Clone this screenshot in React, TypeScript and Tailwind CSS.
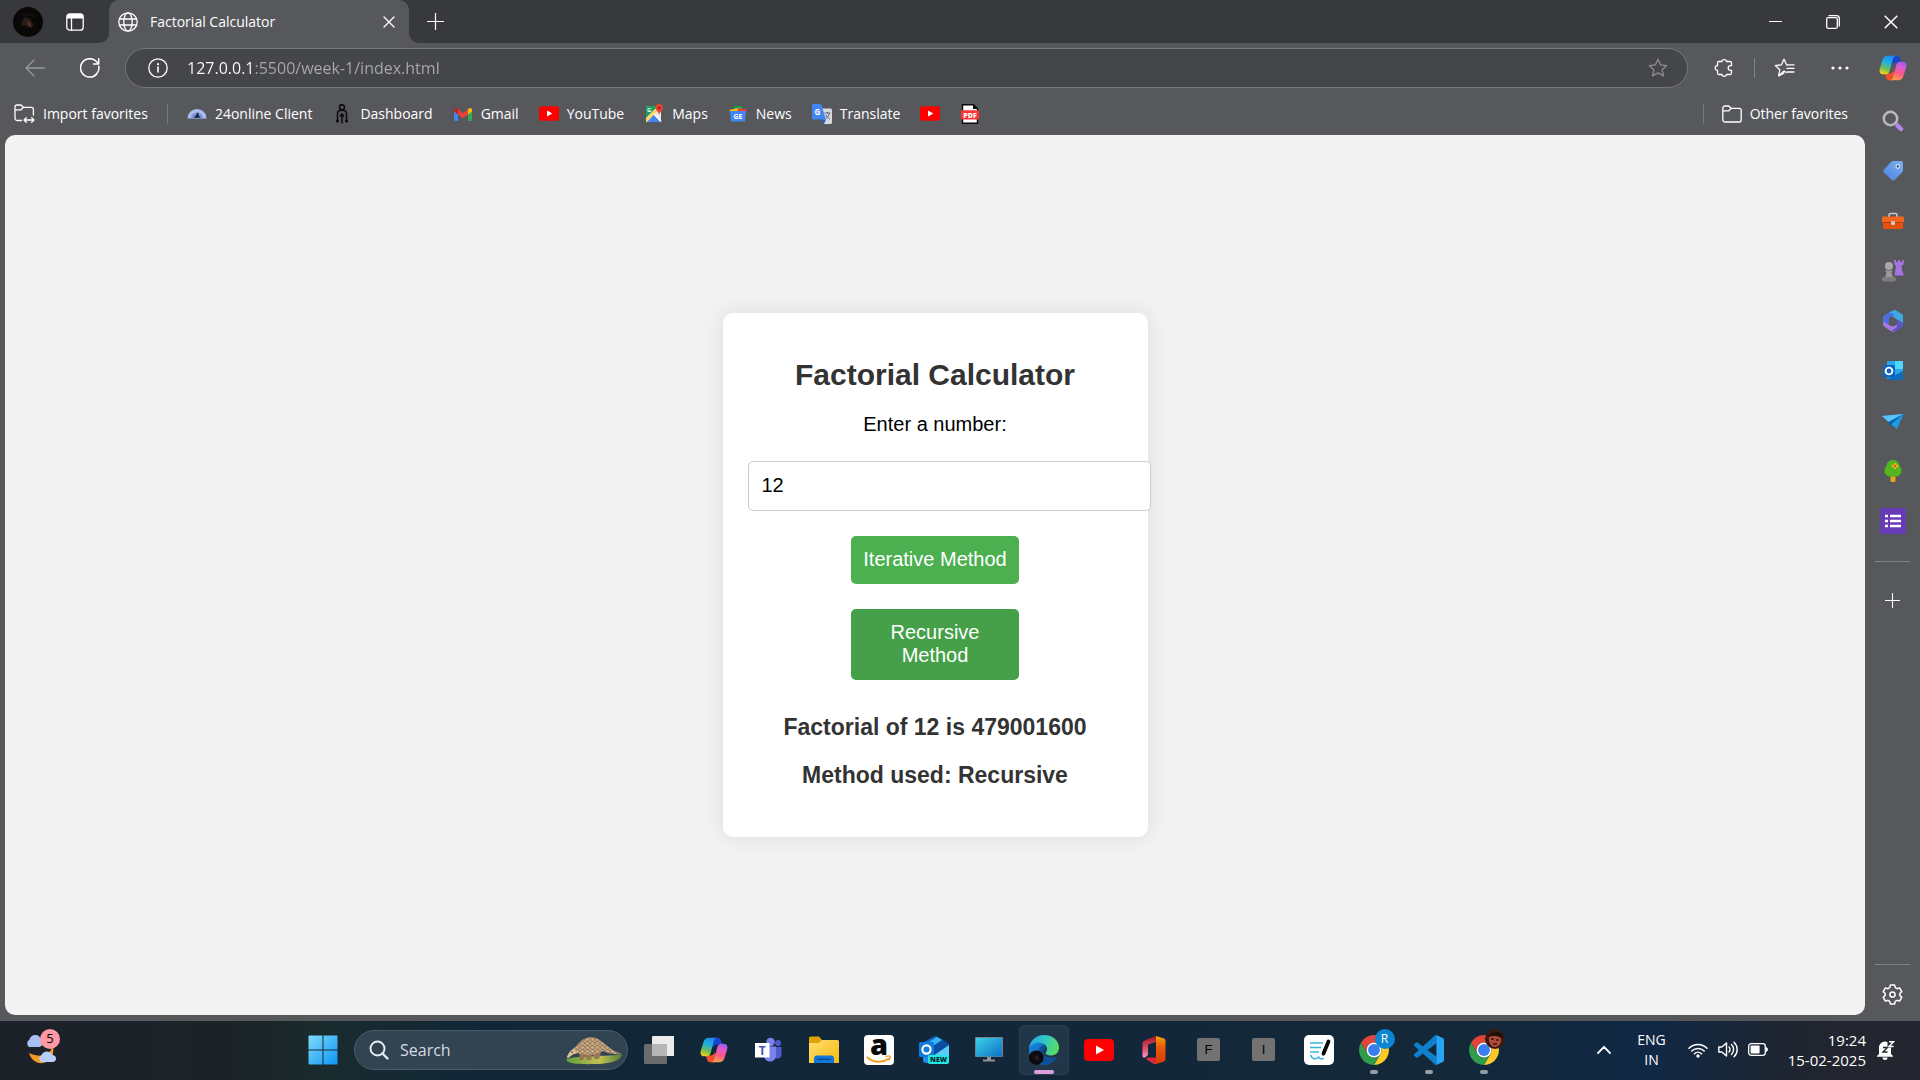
import React, { useState } from "react";

type P = { className?: string };

/* ---------- browser chrome icons ---------- */

const line = {
  fill: "none",
  stroke: "currentColor",
  strokeWidth: 1.3,
  strokeLinecap: "round" as const,
  strokeLinejoin: "round" as const,
};

const STAR = "M10 1.2l2.6 5.6 6.1.8-4.5 4.2 1.2 6.1-5.4-3-5.4 3 1.2-6.1L1.3 7.6l6.1-.8z";

const Avatar = () => (
  <svg viewBox="0 0 30 30" className="size-[30px]">
    <circle cx="15" cy="15" r="15" fill="#0a0707" />
    <path d="M9 14l3-4 4 1 3 4 2 5-4-2-2 3-3-3-4 1z" fill="#2c1a17" />
    <path d="M14 14l3 2 2 5-3-2z" fill="#5a3a30" />
    <path d="M8 8l5-2 7 1 3 4-6-2z" fill="#190f12" />
  </svg>
);

const TabActions = () => (
  <svg viewBox="0 0 18 18" className="size-[18px]">
    <rect x=".8" y=".8" width="16.4" height="16.4" rx="3" {...line} />
    <path d="M1 5.5V3.5A2.6 2.6 0 0 1 3.600 1h10.800A2.600 2.600 0 0 1 17 3.500v2z" fill="currentColor" />
    <path d="M5.500 5.500v11.500" {...line} />
  </svg>
);

const Globe = () => (
  <svg viewBox="0 0 20 20" className="size-[20px]">
    <g {...line}>
      <circle cx="10" cy="10" r="9.200" />
      <ellipse cx="10" cy="10" rx="4.200" ry="9.200" />
      <path d="M1.500 7h17M1.500 13h17" />
    </g>
  </svg>
);

const Cross = ({ className }: P) => (
  <svg viewBox="0 0 12 12" className={className}>
    <path d="M1 1l10 10M11 1L1 11" {...line} />
  </svg>
);

const Plus = ({ className }: P) => (
  <svg viewBox="0 0 18 18" className={className}>
    <path d="M9 .5v17M.5 9h17" {...line} />
  </svg>
);

const BackArrow = () => (
  <svg viewBox="0 0 20 18" className="h-[18px] w-[20px]">
    <path d="M19.500 9H1M9 1L1 9l8 8" {...line} />
  </svg>
);

const Reload = () => (
  <svg viewBox="0 0 20 20" className="size-[20px]">
    <path d="M18.800 8.200A9.200 9.200 0 1 1 15.500 2.700L18.500 5.500M18.700 .8v5.200h-5.200" {...line} strokeWidth={1.5} />
  </svg>
);

const Info = () => (
  <svg viewBox="0 0 20 20" className="size-[20px] shrink-0">
    <circle cx="10" cy="10" r="9.200" {...line} />
    <path d="M10 9v5" {...line} strokeWidth={1.600} />
    <circle cx="10" cy="6.200" r="1.100" fill="currentColor" />
  </svg>
);

const StarOutline = () => (
  <svg viewBox="0 0 20 20" className="size-[20px]">
    <path d={STAR} {...line} />
  </svg>
);

const Puzzle = () => (
  <svg viewBox="0 0 20 20" className="size-[20px]">
    <path
      d="M7.800 3.500a2.400 2.400 0 0 1 4.700 0h3.500a1.500 1.500 0 0 1 1.500 1.500v2.700h-1a2.300 2.300 0 0 0 0 4.600h1v2.700a1.500 1.500 0 0 1-1.500 1.500h-3.500a2.400 2.400 0 0 1-4.700 0H5A1.500 1.500 0 0 1 3.500 15v-2.700a2.300 2.300 0 0 1 0-4.600V5A1.500 1.500 0 0 1 5 3.500z"
      {...line}
    />
  </svg>
);

const StarList = () => (
  <svg viewBox="0 0 21 20" className="h-[20px] w-[21px]">
    <path d="M12 14.500l-2-1.500-5.400 4.900 1.200-6.100L1.300 7.600l6.100-.8L10 1.200l2.600 5.600 1 .2M4.800 17.900l5-2.800" {...line} />
    <path d="M13 10.300h7M13 14h7M14.500 6.800h5.500" {...line} />
  </svg>
);

const Dots = () => (
  <svg viewBox="0 0 18 4" className="h-[4px] w-[18px]" fill="currentColor">
    <circle cx="2" cy="2" r="1.600" />
    <circle cx="9" cy="2" r="1.600" />
    <circle cx="16" cy="2" r="1.600" />
  </svg>
);

const FolderOut = () => (
  <svg viewBox="0 0 20 18" className="h-[18px] w-[20px]">
    <path d="M.8 4V3A2 2 0 0 1 2.800 1h4l2.400 2.300h8a2 2 0 0 1 2 2v9.700a2 2 0 0 1-2 2H2.800a2 2 0 0 1-2-2zM.8 5.800h6L9.200 3.300" {...line} />
  </svg>
);

const ImportFolder = () => (
  <svg viewBox="0 0 21 19" className="h-[19px] w-[21px]">
    <path d="M7.500 16.500H3A2 2 0 0 1 1 14.500V3A2 2 0 0 1 3 1h4l2.400 2.300h8a2 2 0 0 1 2 2V11M1 5.800h6L9.400 3.300" {...line} />
    <path d="M10 16h10M12.300 13.700L10 16l2.300 2.300M17.700 13.700L20 16l-2.300 2.300" {...line} />
  </svg>
);

const Minimize = () => (
  <svg viewBox="0 0 13 13" className="size-[13px]">
    <path d="M0 6.500h13" stroke="currentColor" />
  </svg>
);

const Restore = () => (
  <svg viewBox="0 0 14 14" className="size-[14px]">
    <rect x=".7" y="2.700" width="10.600" height="10.600" rx="1.500" {...line} />
    <path d="M3 .7h7.500a2.800 2.800 0 0 1 2.800 2.800V11" {...line} />
  </svg>
);

const gearPath = (() => {
  const pts: string[] = [];
  for (let k = 0; k < 6; k++) {
    for (const [off, r] of [[-22, 7.4], [-13, 9.7], [13, 9.7], [22, 7.4]]) {
      const a = ((k * 60 - 90 + off) * Math.PI) / 180;
      pts.push(`${(10.5 + r * Math.cos(a)).toFixed(2)} ${(10.5 + r * Math.sin(a)).toFixed(2)}`);
    }
  }
  return "M" + pts.join("L") + "z";
})();

const Gear = () => (
  <svg viewBox="0 0 21 21" className="size-[21px]">
    <path d={gearPath} {...line} strokeWidth={1.500} />
    <circle cx="10.500" cy="10.500" r="2.600" {...line} strokeWidth={1.500} />
  </svg>
);

const RIBBON =
  "M9 .8h9c-2.600 0-3.600 1.200-4.300 3.800L10.800 15.500c-.8 2.800-2 3.800-4.300 3.800H4.500C1.200 19.300-.1 17 .9 13.500L3.600 4.700C4.500 2 6 .8 9 .8z";
const FOLD = "M14.500 .8h3.300c1.700 0 2.600.8 3.100 2.500l1.300 4.200h-3.700c-3.200 0-4.500.9-5.300 3.200l-1-2 1.500-5.200z";

const Copilot = ({ className }: P) => (
  <svg viewBox="0 0 28 26" className={className}>
    <defs>
      <linearGradient id="cpA" x1=".6" y1="0" x2=".3" y2="1">
        <stop offset="0" stopColor="#1c8cf0" />
        <stop offset=".4" stopColor="#22b0dc" />
        <stop offset=".72" stopColor="#6dbf52" />
        <stop offset="1" stopColor="#f7d21b" />
      </linearGradient>
      <linearGradient id="cpB" x1=".6" y1="0" x2=".3" y2="1">
        <stop offset="0" stopColor="#fba04a" />
        <stop offset=".4" stopColor="#f9588a" />
        <stop offset=".72" stopColor="#dd5ad0" />
        <stop offset="1" stopColor="#9a5cf2" />
      </linearGradient>
    </defs>
    <path d={FOLD} fill="#1746cf" />
    <path d={FOLD} fill="#f0512c" transform="rotate(180 14 13)" />
    <path d={RIBBON} fill="url(#cpA)" />
    <path d={RIBBON} fill="url(#cpB)" transform="rotate(180 14 13)" />
  </svg>
);

/* ---------- favourites icons ---------- */

const Gauge = () => (
  <svg viewBox="0 0 20 20" className="size-[20px]">
    <path d="M.5 14.500a9.500 9.500 0 0 1 19 0z" fill="#a9bdec" />
    <path d="M4 14.500a6 6 0 0 1 12 0z" fill="#7b93d6" />
    <path d="M7 14l4-6 1 4 2 1.500z" fill="#1c2542" />
  </svg>
);

const KeyPerson = () => (
  <svg viewBox="0 0 20 20" className="size-[20px]" fill="none" stroke="#0b0b0b" strokeWidth="1.500">
    <circle cx="10" cy="3.200" r="2.500" />
    <path d="M5.500 17V9.500C5.500 7 7.500 6.300 10 6.300s4.500.7 4.500 3.200V17M10 10v9.500M8 12.500l2-2.500 2 2.500" />
    <circle cx="5.500" cy="17" r=".8" />
    <circle cx="14.500" cy="17" r=".8" />
  </svg>
);

const Gmail = () => (
  <svg viewBox="0 0 20 20" className="size-[20px]">
    <path d="M1 6v9.500A1.500 1.500 0 0 0 2.500 17H5V9z" fill="#4285f4" />
    <path d="M19 6v9.500a1.500 1.500 0 0 1-1.500 1.500H15V9z" fill="#34a853" />
    <path d="M15 5.500l1-1c1.400-1.100 3-.3 3 1.500v1.500L15 10.500z" fill="#fbbc04" />
    <path d="M5 5.500l-1-1C2.600 3.400 1 4.200 1 6v1.500l4 3z" fill="#c5221f" />
    <path d="M5 5.300l5 3.900 5-3.900v5.200l-5 3.800-5-3.800z" fill="#ea4335" />
  </svg>
);

const YouTube = ({ className }: P) => (
  <svg viewBox="0 0 30 22" className={className}>
    <rect width="30" height="22" rx="4" fill="#f00" />
    <path d="M12 6.500l8 4.500-8 4.500z" fill="#fff" />
  </svg>
);

const Maps = () => (
  <svg viewBox="0 0 20 20" className="size-[20px]">
    <rect x="2" y="2" width="15" height="16" rx="1.500" fill="#e8eaed" />
    <path d="M3.500 2H14L2 14V3.500A1.500 1.500 0 0 1 3.500 2z" fill="#1e9e5a" />
    <path d="M2 18l8-8 7 8z" fill="#4285f4" />
    <path d="M2 14.500L12.500 4l2 2L3 18H2z" fill="#fdd663" />
    <path d="M10 10l7 7.500" stroke="#fff" strokeWidth="1.600" />
    <text x="3" y="8" fontSize="6" fontWeight="700" fill="#fff" fontFamily="Open Sans, sans-serif">G</text>
    <path d="M15.200 0a3.700 3.700 0 0 0-3.700 3.700c0 2.700 3 3.800 3.700 7 .7-3.200 3.700-4.300 3.700-7A3.700 3.700 0 0 0 15.200 0z" fill="#ea4335" />
    <circle cx="15.200" cy="3.700" r="1.300" fill="#8c1d14" />
  </svg>
);

const News = () => (
  <svg viewBox="0 0 20 20" className="size-[20px]">
    <path d="M6 2h8.500v5H6z" fill="#0c9d58" />
    <path d="M1.500 6L12 3.500 13 8H2z" fill="#fbbc04" />
    <path d="M10 4l8.500 1.500L18 9h-9z" fill="#ea4335" />
    <path d="M2 7h16l-1 10.500H3z" fill="#4285f4" />
    <text x="10" y="14.500" fontSize="7" fontWeight="700" textAnchor="middle" fill="#fff" fontFamily="Open Sans, sans-serif">GE</text>
  </svg>
);

const Translate = () => (
  <svg viewBox="0 0 20 20" className="size-[20px]">
    <path d="M8 4.500h10.500A1.500 1.500 0 0 1 20 6v12.500a1.500 1.500 0 0 1-1.500 1.500H12z" fill="#d5d8dc" />
    <path d="M1.500 0H9l5 15.500H1.500A1.500 1.500 0 0 1 0 14V1.500A1.500 1.500 0 0 1 1.500 0z" fill="#4285f4" />
    <path d="M9.500 15.500H14L12 20z" fill="#2a56c6" />
    <text x="5.500" y="10.500" fontSize="8" fontWeight="700" textAnchor="middle" fill="#fff" fontFamily="Open Sans, sans-serif">G</text>
    <path d="M12.500 9h6M15.500 8v1.500M17.500 9c-.5 2.500-2 4.500-4 6M14 11c.8 1.800 2 3 3.800 4" stroke="#5f6772" fill="none" />
  </svg>
);

const Pdf = () => (
  <svg viewBox="0 0 20 20" className="size-[20px]">
    <path d="M2.500 .7h11l4 4v14.600h-15z" fill="#fff" stroke="#0a0a0a" strokeWidth="1.400" />
    <path d="M13 .5v4.500h4.500z" fill="#0a0a0a" />
    <rect x="1" y="6.300" width="18" height="9.200" rx="1" fill="#fb3434" />
    <text x="10" y="13.500" fontSize="7" fontWeight="800" textAnchor="middle" fill="#fff" fontFamily="Open Sans, sans-serif">PDF</text>
  </svg>
);

/* ---------- sidebar icons ---------- */

const SideSearch = () => (
  <svg viewBox="0 0 22 22" className="size-[22px]">
    <path d="M15.500 15.500l3.500 3.500" stroke="#b487ee" strokeWidth="4.500" strokeLinecap="round" />
    <circle cx="8.500" cy="8.500" r="6.700" fill="none" stroke="#b9b9b9" strokeWidth="2.500" />
  </svg>
);

const Tag = () => (
  <svg viewBox="0 0 22 22" className="size-[22px]">
    <defs>
      <linearGradient id="tg" x1="1" y1="0" x2="0" y2="1">
        <stop offset="0" stopColor="#7fb0f5" />
        <stop offset="1" stopColor="#4a82dc" />
      </linearGradient>
    </defs>
    <path d="M11 1h8a2 2 0 0 1 2 2v7.500a2 2 0 0 1-.6 1.400l-7.800 8a2 2 0 0 1-2.800 0l-8-7.400a2 2 0 0 1 0-2.800L9.500 1.600A2 2 0 0 1 11 1z" fill="url(#tg)" />
    <circle cx="15.800" cy="6.500" r="1.800" fill="#28406b" stroke="#d7e2f5" strokeWidth="1.300" />
  </svg>
);

const Toolbox = () => (
  <svg viewBox="0 0 22 22" className="size-[22px]">
    <path d="M7 7V5a1.500 1.500 0 0 1 1.500-1.500h5A1.500 1.500 0 0 1 15 5v2" fill="none" stroke="#c9c9c9" strokeWidth="1.600" />
    <rect x="1" y="11" width="20" height="8" rx="1" fill="#e8500f" />
    <rect y="6.500" width="22" height="6" rx="1" fill="#f2661d" />
    <path d="M1 12.500h20" stroke="#b93a06" />
    <rect x="9" y="11" width="4" height="4" rx="1.500" fill="#cfcfcf" />
  </svg>
);

const Chess = () => (
  <svg viewBox="0 0 22 22" className="size-[22px]">
    <path d="M12 0h2v2h2V0h2v2h2V0h2l-.5 4.500L19.500 6l1 6 1.500 3.500H12.500L14 6l-1.500-1.500z" fill="#a673e0" />
    <circle cx="7" cy="6" r="4" fill="#a8a8a8" />
    <path d="M3 10.500h8l-1.500 2 1.500 5H3l1.500-5z" fill="#9a9a9a" />
    <rect y="17" width="14" height="4.500" rx="2" fill="#7e7e7e" />
  </svg>
);

const M365 = () => (
  <svg viewBox="0 0 22 22" className="size-[22px]">
    <path d="M7 2.500L11.500 .3c1-.4 1.600-.3 2.500.2l5.500 3.200c1 .6 1.500 1.400 1.500 2.600V13L15 9.500 8.500 5z" fill="#3fa9e8" />
    <path d="M8.500 3L7 2.500 2.500 5C1.500 5.700 1 6.500 1 7.600v7l4 2 2-3V10c0-1.700.5-2.600 2-3.500l4-2.300z" fill="#4a6fe0" />
    <path d="M1 14c0 1.200.4 2.200 1.500 2.800l6.500 4.400c1.200.8 2.600.8 3.800 0l2.200-1.200v-5.500l-3 1.500c-1.300.6-2.300.4-3.500-.3L1 11.500z" fill="#a678e0" />
    <path d="M15 9.500L21 13v1.500c0 1.300-.3 2.200-1.500 3L13 21c-1.300.5-2.500.4-3.500-.3l4.500-3c.8-.6 1-1.200 1-2.200z" fill="#5a55c8" />
  </svg>
);

const Outlook = () => (
  <svg viewBox="0 0 22 22" className="size-[22px]">
    <rect x="5" y="1" width="16" height="19" rx="1" fill="#1490df" />
    <path d="M5 2a1 1 0 0 1 1-1h7v8H5zM13 9h8v6h-8z" fill="#28a8ea" />
    <path d="M13 1h7a1 1 0 0 1 1 1v7h-8z" fill="#50d9ff" />
    <path d="M4 20l17-9v9z" fill="#0f6cbd" />
    <rect x="1" y="5" width="12" height="12" rx="1" fill="#0a64c0" />
    <circle cx="7" cy="11" r="3.400" fill="none" stroke="#fff" strokeWidth="1.900" />
  </svg>
);

const Plane = () => (
  <svg viewBox="0 0 22 22" className="size-[22px]">
    <path d="M0 6L21.500 4 15 19l-5-4z" fill="#1e9be6" />
    <path d="M0 6L21.500 4 6.500 12z" fill="#58c4f7" />
    <path d="M6.500 12L21.500 4 9.500 14 8 17.500z" fill="#0b62a8" />
  </svg>
);

const Tree = () => (
  <svg viewBox="0 0 22 22" className="size-[22px]">
    <rect x="8.500" y="15" width="5" height="7" rx="1" fill="#e9a51c" />
    <path d="M11 0c4 0 6.500 3 6.500 6 1.500 1.500 2 3 2 5 0 4-3.500 5.800-8.500 5.800S2.500 15 2.500 11c0-2 .5-3.500 2-5C4.500 3 7 0 11 0z" fill="#55b51f" />
    <path d="M13 2.500l1.500 2.300L17 6l-2.500 1.300L13 9.500l-1.400-2.200L9 6l2.600-1.200z" fill="#fdc81c" />
    <circle cx="13" cy="6" r="1.400" fill="#e5571b" />
  </svg>
);

const ListTile = () => (
  <svg viewBox="0 0 26 26" className="size-[26px]">
    <rect width="26" height="26" rx="2" fill="#673ab7" />
    <path d="M5 8h3M5 13h3M5 18h3M10 8h11M10 13h11M10 18h11" stroke="#fff" strokeWidth="2.600" />
  </svg>
);

/* ---------- taskbar icons ---------- */

const Weather = () => (
  <svg viewBox="0 2 36 38" className="h-[38px] w-[36px]">
    <path d="M27 12c2 12-8 19-23 12 2 7 8 11 14 10 8-1 13-9 9-22z" fill="#f39a1f" />
    <path d="M4 18a4.500 4.500 0 0 1 .5-7.500 6 6 0 0 1 11-1.500c3 .5 4 8.500-1.500 9z" fill="#a9c1f2" />
    <path d="M16 33a4 4 0 0 1 .5-7 6 6 0 0 1 11 0c5 .5 4.500 7 0 7z" fill="#b8cdf7" />
  </svg>
);

const Windows = () => (
  <svg viewBox="0 0 30 30" className="size-[30px]">
    <defs>
      <linearGradient id="wn" gradientUnits="userSpaceOnUse" x1="0" y1="0" x2="30" y2="30">
        <stop offset="0" stopColor="#82dcfb" />
        <stop offset="1" stopColor="#0a93f5" />
      </linearGradient>
    </defs>
    <path d="M1 .5h13.500v14H.5V1zM15.500 .5H29l.5.500v13.500h-14zM.5 15.500h14v14H1l-.5-.5zM15.500 15.500h14V29l-.5.500H15.500z" fill="url(#wn)" />
  </svg>
);

const Magnifier = () => (
  <svg viewBox="0 0 20 20" className="size-[20px]">
    <circle cx="8.500" cy="8.500" r="7" fill="none" stroke="#e8edf2" strokeWidth="1.900" />
    <path d="M13.500 13.500L18.500 18.500" stroke="#e8edf2" strokeWidth="2.400" strokeLinecap="round" />
  </svg>
);

const Pangolin = () => (
  <svg viewBox="0 0 58 30" className="h-[30px] w-[58px]">
    <defs>
      <pattern id="sc" width="5" height="4" patternUnits="userSpaceOnUse">
        <rect width="5" height="4" fill="#c9ab86" />
        <path d="M0 0q2.500 5 5 0M-2.500 2q2.500 4 5 0M2.500 2q2.500 4 5 0" fill="none" stroke="#80634a" strokeWidth=".7" />
      </pattern>
      <linearGradient id="gr" x1="0" y1="0" x2="1" y2="0">
        <stop offset="0" stopColor="#5f9d3a" />
        <stop offset=".6" stopColor="#c3c352" />
        <stop offset="1" stopColor="#4f7f38" />
      </linearGradient>
    </defs>
    <path d="M1 24.500C10 20 45 22 57 19c0 6-10 9.500-25 10C15 29.500 2 29 1 24.500z" fill="url(#gr)" />
    <path d="M15 17l-1 8h4l2-5 2 5h4l1-6 3 5h4l2-7z" fill="#9b7654" />
    <path d="M2 22c3-8 8-9 11-13C18 3 26 0 33 4c7 4 12 11 23 15-7 1-13-1-18-3-6 4-16 5-23 3-4-2-8 1-12 4z" fill="url(#sc)" />
    <path d="M2 23c1-5 4-8 7-9l3 4c-4 0-6 3-9 5z" fill="#dcc0a0" />
    <circle cx="7" cy="17" r=".8" fill="#2c2018" />
  </svg>
);

const TaskView = () => (
  <svg viewBox="0 0 30 28" className="h-[28px] w-[30px]">
    <rect y="8" width="23" height="20" rx="1.500" fill="#6a6c6e" />
    <rect x="8" width="22.500" height="20" rx="1" fill="#ececec" />
    <path d="M8 8h15v12H8z" fill="#b4b6b7" />
  </svg>
);

const Teams = () => (
  <svg viewBox="0 0 28 26" className="h-[26px] w-[28px]">
    <circle cx="15.500" cy="5" r="4.200" fill="#7b83eb" />
    <circle cx="23" cy="6" r="3" fill="#5059c9" />
    <path d="M19 10h7.500v7c0 3-1.500 4.500-4 4.500H19z" fill="#5059c9" />
    <path d="M9 9.500h12V18c0 4-2.500 6.500-6 6.500S9 22 9 18z" fill="#7b83eb" />
    <rect x="0" y="6" width="14.500" height="14.500" fill="#fff" />
    <text x="7.200" y="17.500" fontSize="12" fontWeight="700" textAnchor="middle" fill="#4b53bc" fontFamily="Open Sans, sans-serif">T</text>
  </svg>
);

const Explorer = () => (
  <svg viewBox="0 0 30 28" className="h-[28px] w-[30px]">
    <defs>
      <linearGradient id="ex" x1="0" y1="0" x2="1" y2="1">
        <stop offset="0" stopColor="#ffdf70" />
        <stop offset="1" stopColor="#f9b912" />
      </linearGradient>
    </defs>
    <path d="M0 2a1.500 1.500 0 0 1 1.500-1.500H10L13 4v5H0z" fill="#e0a008" />
    <path d="M0 7h9.500L13 4h15.500A1.500 1.500 0 0 1 30 5.500V27H0z" fill="url(#ex)" />
    <path d="M5 27v-4.500A3 3 0 0 1 8 19.500h14a3 3 0 0 1 3 3V27z" fill="#0f78d4" />
    <path d="M8 23.300h13.500" stroke="#0a4c96" strokeWidth="1.400" />
  </svg>
);

const Amazon = () => (
  <svg viewBox="0 0 30 30" className="size-[30px] overflow-visible">
    <rect width="30" height="30" rx="4" fill="#fff" />
    <text x="15" y="20" fontSize="29" fontWeight="800" textAnchor="middle" fill="#0a0a0a" fontFamily="Open Sans, sans-serif">a</text>
    <path d="M3.500 22.500c6.500 5.500 15 5.500 21 1.300" stroke="#f79a1c" strokeWidth="2" fill="none" strokeLinecap="round" />
    <path d="M21.500 21.700c2-.8 4-.8 4.500-.3.400.6-.2 2.600-1.300 4" stroke="#f79a1c" strokeWidth="1.300" fill="none" />
  </svg>
);

const OutlookNew = () => (
  <svg viewBox="0 0 30 28" className="h-[28px] w-[30px]">
    <path d="M3 7L15 .5c1-.5 2-.5 3 0L30 8v12H3z" fill="#1267c4" />
    <path d="M9 12L24 3.500l6 4.500v3L17 19z" fill="#0a4da3" />
    <path d="M10 6l8-5 5 3-9 6z" fill="#38b4f2" />
    <path d="M14 20l16-11v14c0 2-1 4-3 4H14z" fill="#5ccbf8" />
    <path d="M4 12l15 13-2 2H7c-2 0-3-1-3-3z" fill="#1c8fe6" />
    <rect y="6" width="15" height="15" rx="1.500" fill="#0f7ad8" />
    <circle cx="7.500" cy="13.500" r="4.100" fill="none" stroke="#fff" strokeWidth="2.100" />
    <rect x="9" y="19" width="21" height="9" rx="2" fill="#26e6e0" />
    <text x="19.600" y="26.300" fontSize="7" fontWeight="800" textAnchor="middle" fill="#05222c" fontFamily="Open Sans, sans-serif">NEW</text>
  </svg>
);

const Monitor = () => (
  <svg viewBox="0 0 28 26" className="h-[26px] w-[28px]">
    <defs>
      <linearGradient id="mo" x1="0" y1="0" x2="1" y2="1">
        <stop offset="0" stopColor="#3bd2e6" />
        <stop offset="1" stopColor="#0f6fc8" />
      </linearGradient>
    </defs>
    <rect width="28" height="20" rx="1" fill="#7a8288" />
    <rect x="1" y="1" width="26" height="18.500" fill="url(#mo)" />
    <path d="M12 20h4v2.500h4V24.500H8V22.500h4z" fill="#8c9298" />
  </svg>
);

const Edge = () => (
  <svg viewBox="0 0 30 30" className="size-[30px]">
    <defs>
      <linearGradient id="eg" x1="0" y1=".3" x2="1" y2=".5">
        <stop offset="0" stopColor="#2aa5e8" />
        <stop offset=".5" stopColor="#31c6c9" />
        <stop offset="1" stopColor="#5fdd5a" />
      </linearGradient>
      <linearGradient id="eb" x1="0" y1="0" x2="1" y2="1">
        <stop offset="0" stopColor="#1689de" />
        <stop offset="1" stopColor="#0c4ea3" />
      </linearGradient>
    </defs>
    <path d="M0 15C0 8 4 5 9 6c6 1 8 5 6 8-4 5 2 9 8 9l5-1c-3 5-8 8-13 8A15 15 0 0 1 0 15z" fill="url(#eb)" />
    <path d="M10 20c-1-6 1-9 4-10 3 1 2.500 3 1 5-3 5 3 9 9 8l4-1.500C25 27 20 30 15 29.500c-3-2-4.500-5-5-9.500z" fill="#0f4f98" />
    <path d="M0 13.500C1 5.500 7 0 15 0c9 0 15 6 15 12.500 0 5-3.500 8-8 8-3 0-5.500-1-5.500-2.200 0-1 1.500-1.800 1.500-4.300 0-3.500-3.500-6.500-8-6.500-4.500 0-8.500 2.500-10 6z" fill="url(#eg)" />
    <circle cx="7.300" cy="22.700" r="7.300" fill="#0d0b0d" />
    <path d="M5 22l3-2 2 3-1 3z" fill="#2e1f1e" />
  </svg>
);

const Office = () => (
  <svg viewBox="0 0 24 28" className="h-[28px] w-[24px]">
    <defs>
      <linearGradient id="of" x1="0" y1="0" x2="0" y2="1">
        <stop offset="0" stopColor="#a5141c" />
        <stop offset=".7" stopColor="#e8607e" />
        <stop offset="1" stopColor="#f0a0e0" />
      </linearGradient>
      <linearGradient id="oo" x1="0" y1="0" x2="0" y2="1">
        <stop offset="0" stopColor="#f5a400" />
        <stop offset=".4" stopColor="#e85a0c" />
        <stop offset="1" stopColor="#d63b02" />
      </linearGradient>
    </defs>
    <path d="M14 0L3.500 4C1.500 4.800.5 6 .5 8v12c0 1.500 2 2 3 1l2.500-2V8.500L14 6z" fill="url(#of)" />
    <path d="M14 0l7.500 2.200c1.200.4 2 1.200 2 2.500v18.500c0 1.300-.8 2-2 2.500L14 28z" fill="url(#oo)" />
    <path d="M5 21.500h9V28c-1 .3-2 0-3-.5l-5.500-3.500c-1.500-1-1.500-2-.5-2.500z" fill="#d8283a" />
  </svg>
);

const Notes = () => (
  <svg viewBox="0 0 30 30" className="size-[30px]">
    <rect width="30" height="30" rx="5" fill="#fff" />
    <path d="M6 8h13M6 12.500h11M6 17h9M6.500 20c1.500 4 5 5 8 2 2 2.500 3.500 2.500 5 1" stroke="#38b6d8" strokeWidth="1.700" fill="none" />
    <path d="M24.500 6.500L19.500 18.500" stroke="#0a0a0a" strokeWidth="3.800" strokeLinecap="round" />
    <path d="M18.500 20.800l-.5-3.300 3 1.300z" fill="#0a0a0a" />
  </svg>
);

const Chrome = () => (
  <svg viewBox="2 2 44 44" className="size-[30px]">
    <path d="M4.950 13A22 22 0 0 1 43.050 13H24A11 11 0 0 0 14.470 29.500z" fill="#e0443a" />
    <path d="M43.050 13A22 22 0 0 1 24 46L33.530 29.500A11 11 0 0 0 24 13z" fill="#fdc926" />
    <path d="M24 46A22 22 0 0 1 4.950 13L14.470 29.500A11 11 0 0 0 33.530 29.500z" fill="#2f9c4c" />
    <circle cx="24" cy="24" r="11" fill="#fff" />
    <circle cx="24" cy="24" r="8.700" fill="#3b7ded" />
  </svg>
);

const VSCode = () => (
  <svg viewBox="0 0 24 24" className="size-[30px]">
    <path
      fill="#0f80cc"
      d="M23.150 2.587L18.210.210a1.494 1.494 0 0 0-1.705.290l-9.460 8.630-4.120-3.128a.999.999 0 0 0-1.276.057L.327 7.261A1 1 0 0 0 .326 8.740L3.899 12 .326 15.260a1 1 0 0 0 .001 1.479L1.650 17.940a.999.999 0 0 0 1.276.057l4.120-3.128 9.460 8.630a1.492 1.492 0 0 0 1.704.290l4.942-2.377A1.500 1.500 0 0 0 24 20.060V3.939a1.500 1.500 0 0 0-.850-1.352zm-5.146 14.861L10.826 12l7.178-5.448v10.896z"
    />
    <path d="M18.100.200l5.050 2.387A1.500 1.500 0 0 1 24 3.939V20.060a1.500 1.500 0 0 1-.850 1.352L18.100 23.800z" fill="#2aa4f4" />
  </svg>
);

const Chevron = () => (
  <svg viewBox="0 0 14 9" className="h-[9px] w-[14px]">
    <path d="M1 8l6-6.200L13 8" {...line} strokeWidth={1.800} />
  </svg>
);

const Wifi = () => (
  <svg viewBox="0 0 20 16" className="h-[16px] w-[20px]">
    <path d="M1 6.200a12.700 12.700 0 0 1 18 0M3.800 9a8.800 8.800 0 0 1 12.400 0M6.500 11.700a5 5 0 0 1 7 0" {...line} strokeWidth={1.600} />
    <circle cx="10" cy="14" r="1.700" fill="currentColor" />
  </svg>
);

const Speaker = () => (
  <svg viewBox="0 0 20 17" className="h-[17px] w-[20px]">
    <path d="M.8 6h3L8.500 2v13L3.800 11h-3zM11 6a3.500 3.500 0 0 1 0 5M13.500 3.500a7 7 0 0 1 0 10M16 1.200a10 10 0 0 1 0 14.600" {...line} strokeWidth={1.400} />
  </svg>
);

const Battery = () => (
  <svg viewBox="0 0 20 13" className="h-[13px] w-[20px]">
    <rect x=".7" y=".7" width="16.600" height="11.600" rx="2.500" {...line} />
    <rect x="2.600" y="2.600" width="9" height="7.800" rx="1" fill="currentColor" />
    <path d="M18.500 4.500c1.200.3 1.200 3.700 0 4z" fill="currentColor" stroke="currentColor" />
  </svg>
);

const Bell = () => (
  <svg viewBox="0 0 18 20" className="h-[20px] w-[18px]">
    <path d="M2 8a6 6 0 0 1 6-6.500 6 6 0 0 1 6 6V14l2 2v.8H0V16l2-2z" fill="currentColor" />
    <path d="M5.500 17.500h5a2.500 2.500 0 0 1-5 0z" fill="currentColor" />
    <path d="M6 7.500h4.500L6 12h4.500" stroke="#23252f" strokeWidth="1.400" fill="none" />
    <path d="M10.500 1h7v6.500h-7z" fill="#23252f" />
    <path d="M12 1.800h4.500L12 6.500h4.500" stroke="currentColor" strokeWidth="1.400" fill="none" />
  </svg>
);

/* ---------- data ---------- */

const favorites: { name: string; text?: string; icon: React.ReactNode }[] = [
  { name: "24online Client", text: "24online Client", icon: <Gauge /> },
  { name: "Dashboard", text: "Dashboard", icon: <KeyPerson /> },
  { name: "Gmail", text: "Gmail", icon: <Gmail /> },
  { name: "YouTube", text: "YouTube", icon: <YouTube className="h-[15px] w-[20px]" /> },
  { name: "Maps", text: "Maps", icon: <Maps /> },
  { name: "News", text: "News", icon: <News /> },
  { name: "Translate", text: "Translate", icon: <Translate /> },
  { name: "YouTube home", icon: <YouTube className="h-[15px] w-[20px]" /> },
  { name: "PDF", icon: <Pdf /> },
];

const sideItems: [string, React.ReactNode][] = [
  ["Search", <SideSearch />],
  ["Shopping", <Tag />],
  ["Tools", <Toolbox />],
  ["Games", <Chess />],
  ["Microsoft 365", <M365 />],
  ["Outlook", <Outlook />],
  ["Drop", <Plane />],
  ["Tree", <Tree />],
  ["Lists", <ListTile />],
];

const LetterTile = ({ letter }: { letter: string }) => (
  <span className="flex size-[23px] items-center justify-center rounded-[2px] bg-[#727272] font-['Liberation_Sans'] text-[13px] leading-none text-black">
    {letter}
  </span>
);

type TaskItem = { name: string; icon: React.ReactNode; active?: boolean; running?: boolean; badge?: React.ReactNode };

const tasks: TaskItem[] = [
  { name: "Task view", icon: <TaskView /> },
  { name: "Copilot", icon: <Copilot className="h-[26px] w-[28px]" /> },
  { name: "Teams", icon: <Teams /> },
  { name: "File Explorer", icon: <Explorer /> },
  { name: "Amazon", icon: <Amazon /> },
  { name: "Outlook (new)", icon: <OutlookNew /> },
  { name: "This PC", icon: <Monitor /> },
  { name: "Edge", icon: <Edge />, active: true },
  { name: "YouTube", icon: <YouTube className="h-[22px] w-[30px]" /> },
  { name: "Office", icon: <Office /> },
  { name: "F", icon: <LetterTile letter="F" /> },
  { name: "I", icon: <LetterTile letter="I" /> },
  { name: "Notes", icon: <Notes /> },
  {
    name: "Chrome, profile R",
    icon: <Chrome />,
    running: true,
    badge: (
      <span className="flex size-[20px] items-center justify-center rounded-full bg-[#0b86d1] text-[12px] leading-none text-white">R</span>
    ),
  },
  { name: "Visual Studio Code", icon: <VSCode />, running: true },
  {
    name: "Chrome, second profile",
    icon: <Chrome />,
    running: true,
    badge: (
      <svg viewBox="0 0 20 20" className="size-[20px]">
        <circle cx="10" cy="10" r="10" fill="#3a1a10" />
        <path d="M4 8c2-3 10-3 12 1 1 4-2 9-6 9s-7-5-6-10z" fill="#b04a3a" />
        <path d="M3 8C4 3 13 0 18 6l-1 4c-2-3-8-4-14-2z" fill="#21100c" />
        <path d="M6 10h3M11 11h3M8 15h4" stroke="#3d1512" strokeWidth="1.500" />
      </svg>
    ),
  },
];

/* ---------- calculator ---------- */

type Method = "Iterative" | "Recursive";

const iterative = (n: number) => {
  let r = 1;
  for (let i = 2; i <= n; i++) r *= i;
  return r;
};
const recursive = (n: number): number => (n <= 1 ? 1 : n * recursive(n - 1));

function Calculator() {
  const [value, setValue] = useState("12");
  const [result, setResult] = useState<{ n: number; method: Method }>({ n: 12, method: "Recursive" });
  const run = (method: Method) => setResult({ n: Math.max(0, Math.min(170, Number(value) || 0)), method });
  const answer = result.method === "Iterative" ? iterative(result.n) : recursive(result.n);
  const button = "w-[168px] cursor-pointer rounded-[5px] px-2 pt-3 pb-[13px] text-[20px] leading-[23px] text-white";

  return (
    <main className="flex w-[425px] flex-col items-center rounded-[10px] bg-white p-[25px] text-center font-['Liberation_Sans',Arial,sans-serif] text-black shadow-[0_0_25px_rgba(0,0,0,0.1)]">
      <h1 className="mt-5 text-[30px] leading-[34px] font-bold text-[#333]">Factorial Calculator</h1>
      <label htmlFor="number" className="mt-[21px] text-[20px] leading-[23px]">
        Enter a number:
      </label>
      <input
        id="number"
        type="number"
        value={value}
        onChange={(e) => setValue(e.target.value)}
        className="mt-[25px] box-content h-6 w-full self-start rounded-[5px] border border-[#ccc] bg-white px-[13px] pt-[11px] pb-[13px] text-[20px] outline-none"
      />
      <button type="button" onClick={() => run("Iterative")} className={`${button} mt-[25px] bg-[#4caf50]`}>
        Iterative Method
      </button>
      <button type="button" onClick={() => run("Recursive")} className={`${button} mt-[25px] bg-[#45a049]`}>
        Recursive Method
      </button>
      <div className="mt-[34px] mb-[23px] flex flex-col gap-[21px] text-[23px] leading-[27px] font-bold text-[#333]">
        <p>
          Factorial of {result.n} is {answer}
        </p>
        <p>Method used: {result.method}</p>
      </div>
    </main>
  );
}

/* ---------- page ---------- */

export default function App() {
  return (
    <div className="flex h-screen flex-col overflow-hidden bg-[#57585c] font-['Open_Sans','Noto_Sans',sans-serif] text-[14px] text-white">
      <header className="shrink-0">
        <div className="flex h-[43px]">
          <div className="flex w-[109px] shrink-0 items-center gap-[23px] rounded-br-[10px] bg-[#38393c] pl-[13px]">
            <button type="button" aria-label="Profile"><Avatar /></button>
            <button type="button" aria-label="Tab actions"><TabActions /></button>
          </div>
          <div className="bg-[#38393c]">
            <div className="flex h-full w-[300px] items-center rounded-t-[10px] bg-[#57585c] pr-[14px] pl-[9px]">
              <Globe />
              <span className="ml-3 flex-1 truncate">Factorial Calculator</span>
              <button type="button" aria-label="Close tab"><Cross className="size-[12px]" /></button>
            </div>
          </div>
          <div className="flex flex-1 items-center rounded-bl-[10px] bg-[#38393c] pr-[22px] pl-[18px]">
            <button type="button" aria-label="New tab"><Plus className="size-[17px]" /></button>
            <div className="ml-auto flex items-center gap-11">
              <button type="button" aria-label="Minimize"><Minimize /></button>
              <button type="button" aria-label="Restore"><Restore /></button>
              <button type="button" aria-label="Close"><Cross className="size-[14px]" /></button>
            </div>
          </div>
        </div>

        <div className="flex h-[49px] items-center pr-[13px] pl-[25px]">
          <button type="button" aria-label="Back" className="text-[#97989b]"><BackArrow /></button>
          <button type="button" aria-label="Refresh" className="ml-[35px]"><Reload /></button>
          <div className="ml-[25px] flex h-10 flex-1 items-center rounded-full border border-[#77787b] bg-[#454649] pr-[19px] pl-[22px]">
            <Info />
            <input
              aria-label="Address"
              defaultValue="127.0.0.1:5500/week-1/index.html"
              className="ml-[19px] w-0 flex-1 bg-[linear-gradient(90deg,#fff_68px,#a9aaac_68px)] bg-clip-text text-[16px] text-transparent outline-none"
            />
            <button type="button" aria-label="Add to favorites" className="text-[#8d8e91]"><StarOutline /></button>
          </div>
          <button type="button" aria-label="Extensions" className="ml-[26px]"><Puzzle /></button>
          <span className="mr-[19px] ml-5 h-5 w-px bg-[#808185]" />
          <button type="button" aria-label="Favorites"><StarList /></button>
          <button type="button" aria-label="Settings and more" className="ml-9"><Dots /></button>
          <button type="button" aria-label="Copilot" className="ml-[30px]"><Copilot className="h-[26px] w-[28px]" /></button>
        </div>
      </header>

      <div className="flex min-h-0 flex-1">
        <div className="flex min-w-0 flex-1 flex-col pb-[6px] pl-[5px]">
          <nav aria-label="Favorites bar" className="flex h-[43px] shrink-0 items-center pr-[17px] pl-[9px]">
            <a href="#" className="flex items-center gap-2"><ImportFolder />Import favorites</a>
            <span className="mx-[19px] h-5 w-px bg-[#77787b]" />
            <div className="flex items-center gap-[20px]">
              {favorites.map((f) => (
                <a key={f.name} href="#" aria-label={f.name} className="flex items-center gap-2">
                  {f.icon}
                  {f.text}
                </a>
              ))}
            </div>
            <span className="mr-[18px] ml-auto h-5 w-px bg-[#77787b]" />
            <a href="#" className="flex items-center gap-2"><FolderOut />Other favorites</a>
          </nav>
          <div className="flex min-h-0 flex-1 items-center justify-center rounded-[10px] bg-[#f3f3f3]">
            <Calculator />
          </div>
        </div>

        <aside className="flex w-[55px] shrink-0 flex-col items-center pt-1 pb-[6px]">
          {sideItems.map(([name, icon]) => (
            <button key={name} type="button" aria-label={name} className="flex h-[50px] w-full items-center justify-center">
              {icon}
            </button>
          ))}
          <span className="mt-[15px] h-px w-[35px] bg-[#808185]" />
          <button type="button" aria-label="Customize" className="mt-[31px]"><Plus className="size-[15px]" /></button>
          <span className="mt-auto h-px w-[35px] bg-[#808185]" />
          <button type="button" aria-label="Settings" className="flex h-[50px] items-center pt-2"><Gear /></button>
        </aside>
      </div>

      <footer className="flex h-[59px] shrink-0 items-center bg-[linear-gradient(90deg,#1d2129_0%,#1b2329_12%,#192b2e_17%,#112738_25%,#122739_60%,#142838_75%,#102844_86%,#20252f_94%,#25262f_100%)] pr-[25px] pb-[2px] pl-[25px]">
        <div className="w-[270px] shrink-0">
          <button type="button" aria-label="Weather" className="relative block">
            <Weather />
            <span className="absolute -top-[2px] left-[15px] flex size-[20px] items-center justify-center rounded-full bg-[#ff99a4] text-[13px] leading-none text-black">5</span>
          </button>
        </div>
        <button type="button" aria-label="Start" className="flex w-[55px] justify-center"><Windows /></button>
        <label className="ml-1 flex h-10 w-[274px] items-center rounded-full border border-[#4b5b69] bg-[#324452] pr-1 pl-[14px]">
          <Magnifier />
          <input placeholder="Search" aria-label="Search" className="ml-[11px] w-0 flex-1 bg-transparent text-[16px] outline-none placeholder:text-[#d5dbe0]" />
          <Pangolin />
        </label>
        <div className="ml-[3px] flex">
          {tasks.map((t) => (
            <div key={t.name} className="flex w-[55px] justify-center">
              <button
                type="button"
                aria-label={t.name}
                className={`relative flex size-[50px] items-center justify-center rounded-[5px] ${t.active ? "border border-[#2e404f] bg-[#22364a]" : ""}`}
              >
                {t.icon}
                {t.badge && <span className="absolute top-[4px] left-[26px]">{t.badge}</span>}
                {t.active && <span className="absolute bottom-0 h-1 w-5 rounded-full bg-[#d9a0e0]" />}
                {t.running && <span className="absolute bottom-[1px] h-1 w-2 rounded-full bg-[#949da5]" />}
              </button>
            </div>
          ))}
        </div>
        <div className="ml-auto flex items-center">
          <button type="button" aria-label="Show hidden icons"><Chevron /></button>
          <div className="ml-[26px] text-center leading-[20px]">
            ENG
            <br />
            IN
          </div>
          <div className="ml-[22px] flex items-center gap-[10px]">
            <Wifi />
            <Speaker />
            <Battery />
          </div>
          <div className="ml-[20px] text-right text-[15px] leading-[20px]">
            19:24
            <br />
            15-02-2025
          </div>
          <button type="button" aria-label="Notifications" className="ml-[11px]"><Bell /></button>
        </div>
      </footer>
    </div>
  );
}
